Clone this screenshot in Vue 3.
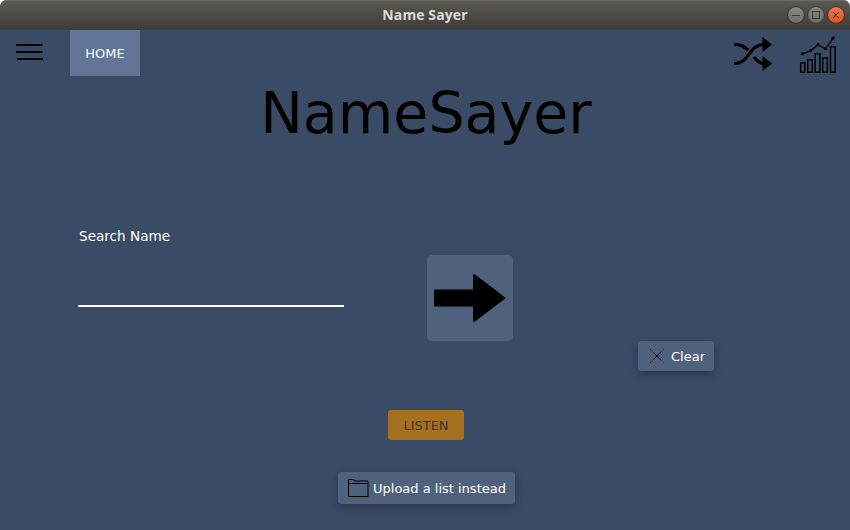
<script setup>
const title = 'Name Sayer'
</script>

<template>
  <div class="window">
    <header class="titlebar">
      <span class="caption">{{ title }}</span>
      <svg class="controls" width="60" height="20" viewBox="0 0 60 20">
        <defs>
          <linearGradient id="grey" x1="0" y1="0" x2="0" y2="1">
            <stop offset="0" stop-color="#8b8982" />
            <stop offset="1" stop-color="#6d6b65" />
          </linearGradient>
          <linearGradient id="orange" x1="0" y1="0" x2="0" y2="1">
            <stop offset="0" stop-color="#f47850" />
            <stop offset="1" stop-color="#e2501e" />
          </linearGradient>
        </defs>
        <g stroke="#35342f" stroke-width="1">
          <circle cx="10" cy="9" r="8.400" fill="url(#grey)" />
          <circle cx="30" cy="9" r="8.400" fill="url(#grey)" />
          <circle cx="50" cy="9" r="8.400" fill="url(#orange)" />
        </g>
        <path d="M6 9.500h8M26.500 5.500h7v7h-7zM47.200 6.200l5.600 5.600M52.800 6.200l-5.600 5.600" fill="none" stroke="#3c3b37" stroke-width="1.100" />
      </svg>
    </header>

    <nav class="toolbar">
      <svg class="menu" width="28" height="18" viewBox="0 0 28 18">
        <path d="M0 1h26.500M0 8h26.500M1 15h26" stroke="#000" stroke-width="2" />
      </svg>
      <button class="home">HOME</button>
      <svg class="shuffle" width="40" height="36" viewBox="0 0 40 36">
        <path d="M1 8.500c6-.3 10 1.500 14 5.700M1 27.500c16 .5 14-19 30-19M21 21c3 4 5.500 6.500 10 6.500" fill="none" stroke="#000" stroke-width="3.200" />
        <path d="M29.500 1L39 8.500 29.500 16zM29.500 20L39 27.500 29.500 35z" />
      </svg>
      <svg class="chart" width="38" height="38" viewBox="0 0 38 38">
        <g fill="none" stroke="#000" stroke-width="1.500">
          <path d="M1.700 26.700h4v9.500h-4zM8.700 23.700h4.600v12.500H8.700zM16.200 17.700h4.700v18.500h-4.700zM23.700 21.700h4.600v14.500h-4.600zM31.500 10.700h4.700v25.500h-4.700z" />
          <path d="M3.500 17.800l8-3 7.500-6 7.500 4 7.500-10.500" stroke-width="1.400" />
        </g>
        <g>
          <circle cx="3.500" cy="17.800" r="1.600" /><circle cx="11.500" cy="14.800" r="1.500" />
          <circle cx="19" cy="8.700" r="1.600" /><circle cx="26.500" cy="12.800" r="1.500" />
          <circle cx="34" cy="2" r="1.600" />
        </g>
      </svg>
    </nav>

    <h1>NameSayer</h1>

    <main>
      <section class="row">
        <label class="field">
          <span>Search Name</span>
          <input type="text" aria-label="Search Name" />
        </label>
        <button class="go" aria-label="Go">
          <svg width="74" height="50" viewBox="0 0 74 50">
            <path d="M2 16.500h38V2.500q0-2 2-1L73 25 42 48.500q-2 1-2-1V33.500H2q-1 0-1-1v-15q0-1 1-1z" />
          </svg>
        </button>
        <button class="raised clear">
          <svg width="16" height="16" viewBox="0 0 16 16">
            <path d="M1 1l14 14M15 1L1 15" stroke="#000" stroke-width=".9" />
          </svg>
          <span>Clear</span>
        </button>
      </section>
      <button class="listen">LISTEN</button>
      <button class="raised upload">
        <svg width="21" height="19" viewBox="0 0 21 19">
          <path d="M.5 17.500V.5h5l1 1.500H20v15.500zM.5 4.500H20" fill="none" stroke="#000" />
        </svg>
        <span>Upload a list instead</span>
      </button>
    </main>
  </div>
</template>

<style>
body {
  background: #fff;
}
</style>

<style scoped>
.window {
  width: 850px;
  height: 530px;
  box-sizing: border-box;
  overflow: hidden;
  border-radius: 7px 7px 0 0;
  background: #3a4b66;
  color: #fff;
  font: 13px/16px "DejaVu Sans", sans-serif;
}
button {
  border: 0;
  margin: 0;
  padding: 2px 0 0;
  font: inherit;
  color: inherit;
  white-space: nowrap;
}
svg {
  display: block;
  flex: none;
}
.titlebar {
  height: 30px;
  box-sizing: border-box;
  display: grid;
  grid-template-columns: 1fr auto 1fr;
  align-items: center;
  padding: 0 4px;
  background: linear-gradient(#5b5952, #3d3c37);
  border-top: 1px solid #6b6961;
}
.caption {
  grid-column: 2;
  padding-bottom: 2px;
  color: #dfdbd2;
  font: bold 14px/18px "Open Sans", "Noto Sans", sans-serif;
  letter-spacing: 0.1px;
}
.controls {
  justify-self: end;
}
.toolbar {
  height: 46px;
  display: flex;
  align-items: flex-start;
  padding: 0 13px 0 16px;
}
.menu {
  margin-top: 14px;
}
.home {
  width: 70px;
  height: 46px;
  margin-left: 26px;
  background: #627596;
}
.shuffle {
  margin: 6px 26px 0 auto;
}
.chart {
  margin-top: 6px;
}
h1 {
  margin: 3px 0 0;
  padding-left: 2px;
  height: 68px;
  font-size: 57px;
  line-height: 68px;
  font-weight: 400;
  text-align: center;
  color: #000;
}
main {
  display: flex;
  flex-direction: column;
  align-items: center;
  padding-top: 81px;
}
.row {
  align-self: stretch;
  display: flex;
  align-items: flex-start;
  height: 143px;
  padding-left: 78px;
}
.field {
  display: flex;
  flex-direction: column;
  width: 266px;
}
.field span {
  padding-left: 1px;
  font-size: 13.6px;
}
.field input {
  height: 63px;
  box-sizing: border-box;
  padding: 28px 0 0;
  border: 0;
  border-bottom: 2px solid #fff;
  background: none;
  outline: 0;
  color: #fff;
  font: inherit;
}
.go {
  width: 86px;
  height: 86px;
  margin: 27px 0 0 83px;
  padding: 0;
  display: grid;
  place-items: center;
  border-radius: 5px;
  background: #50617d;
}
.raised {
  display: flex;
  align-items: center;
  padding-top: 0;
  border-radius: 3px;
  background: #50617d;
  box-shadow: 0 3px 8px rgba(0, 0, 0, 0.3);
}
.raised span {
  padding-top: 2px;
}
.clear {
  width: 76px;
  height: 30px;
  margin: 113px 0 0 125px;
  padding-left: 11px;
  gap: 6px;
}
.listen {
  width: 76px;
  height: 30px;
  margin: 39px 0 32px 2px;
  border-radius: 3px;
  background: #a5701f;
  color: #333733;
}
.upload {
  width: 177px;
  height: 32px;
  margin-left: 3px;
  padding-left: 10px;
  gap: 4px;
}
</style>
